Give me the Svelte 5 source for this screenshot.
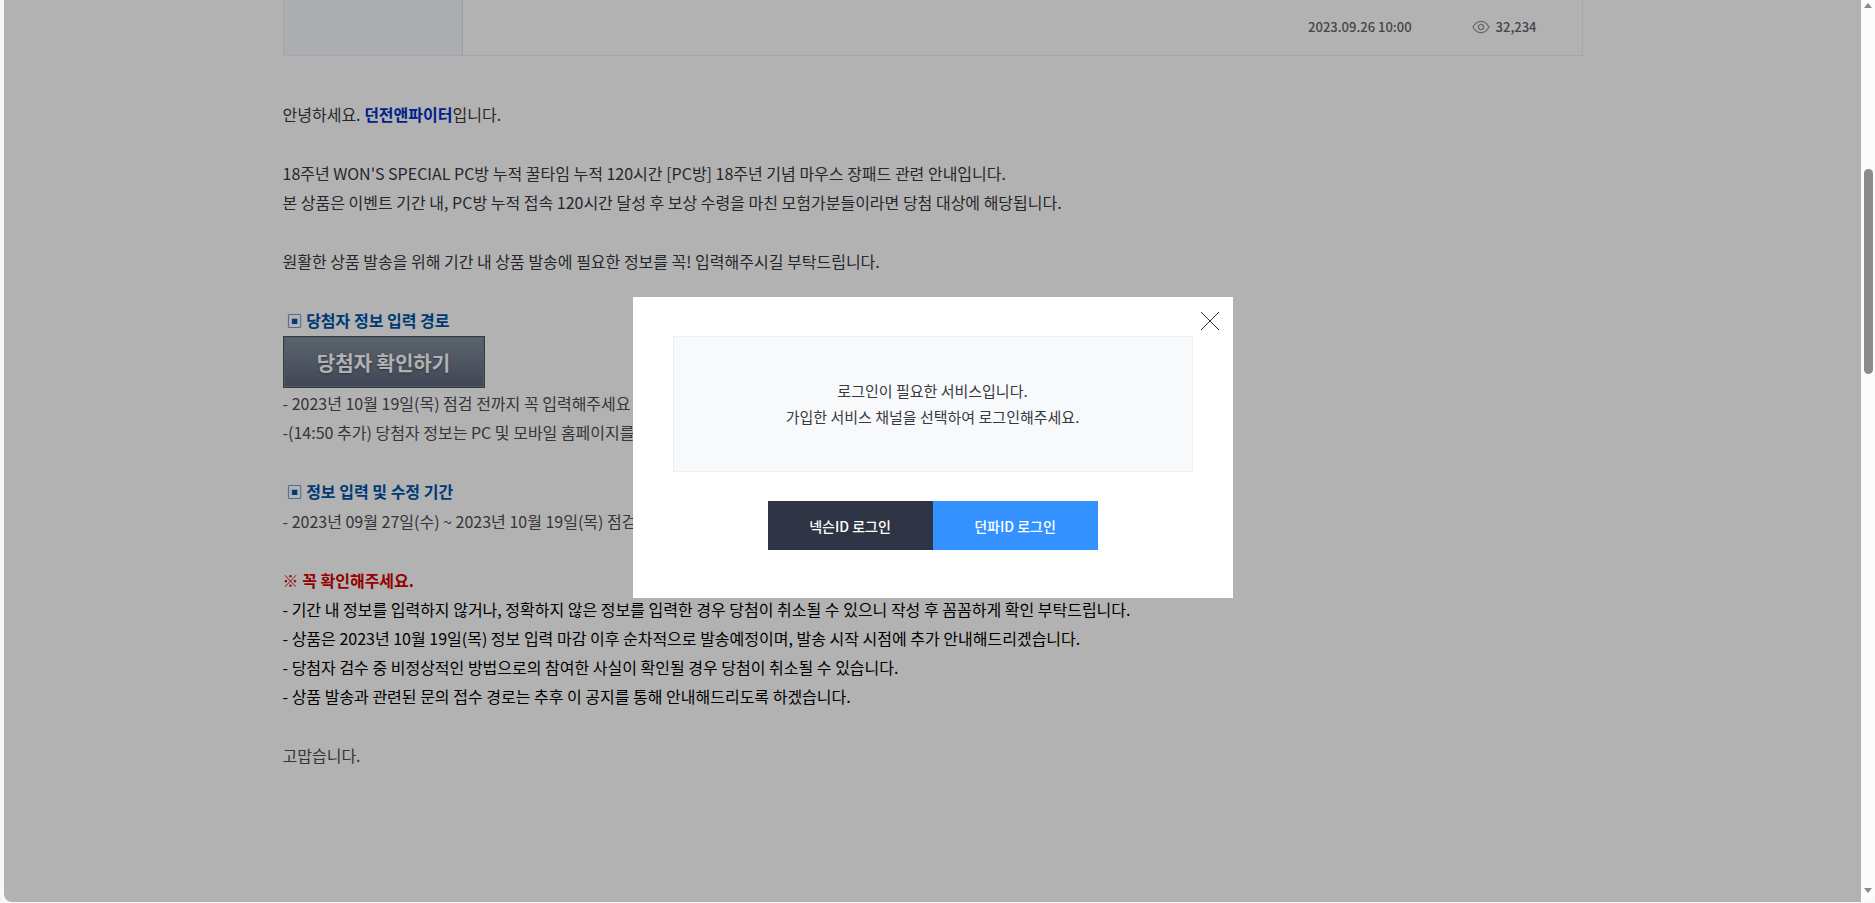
<script>
	const intro = [
		"18주년 WON'S SPECIAL PC방 누적 꿀타임 누적 120시간 [PC방] 18주년 기념 마우스 장패드 관련 안내입니다.",
		"본 상품은 이벤트 기간 내, PC방 누적 접속 120시간 달성 후 보상 수령을 마친 모험가분들이라면 당첨 대상에 해당됩니다."
	];

	const notices = [
		"- 기간 내 정보를 입력하지 않거나, 정확하지 않은 정보를 입력한 경우 당첨이 취소될 수 있으니 작성 후 꼼꼼하게 확인 부탁드립니다.",
		"- 상품은 2023년 10월 19일(목) 정보 입력 마감 이후 순차적으로 발송예정이며, 발송 시작 시점에 추가 안내해드리겠습니다.",
		"- 당첨자 검수 중 비정상적인 방법으로의 참여한 사실이 확인될 경우 당첨이 취소될 수 있습니다.",
		"- 상품 발송과 관련된 문의 접수 경로는 추후 이 공지를 통해 안내해드리도록 하겠습니다."
	];

	let showLogin = $state(true);
	const close = () => (showLogin = false);
</script>

<div class="window">
	<div class="page">
		<main class="content">
			<header class="post-header">
				<div class="thumb"></div>
				<div class="meta">
					<span>2023.09.26 10:00</span>
					<span class="views">
						<svg width="18" height="14" viewBox="0 0 18 14" aria-hidden="true">
							<path
								d="M1 7C3 3.2 5.7 1.3 9 1.3S15 3.2 17 7c-2 3.8-4.7 5.7-8 5.7S3 10.8 1 7Z"
							/>
							<circle cx="9" cy="7" r="2.6" />
						</svg>
						32,234
					</span>
				</div>
			</header>

			<article class="post">
				<p>안녕하세요. <strong class="game">던전앤파이터</strong>입니다.</p>

				<div class="group">
					{#each intro as line}
						<p>{line}</p>
					{/each}
				</div>

				<p>원활한 상품 발송을 위해 기간 내 상품 발송에 필요한 정보를 꼭! 입력해주시길 부탁드립니다.</p>

				<section class="soft">
					<h2><span class="mark">▣</span> 당첨자 정보 입력 경로</h2>
					<button class="winner" type="button">당첨자 확인하기</button>
					<p>- 2023년 10월 19일(목) 점검 전까지 꼭 입력해주세요</p>
					<p>-(14:50 추가) 당첨자 정보는 PC 및 모바일 홈페이지를</p>
				</section>

				<section class="soft">
					<h2><span class="mark">▣</span> 정보 입력 및 수정 기간</h2>
					<p>- 2023년 09월 27일(수) ~ 2023년 10월 19일(목) 점검</p>
				</section>

				<section class="notice">
					<h3>※ 꼭 확인해주세요.</h3>
					{#each notices as line}
						<p>{line}</p>
					{/each}
				</section>

				<p class="soft">고맙습니다.</p>
			</article>
		</main>

		{#if showLogin}
			<div class="dim">
				<div class="modal" role="dialog" aria-modal="true" aria-labelledby="login-message">
					<button class="close" type="button" aria-label="닫기" onclick={close}>
						<svg width="20" height="20" viewBox="0 0 20 20" aria-hidden="true">
							<path d="M1 1l18 18M19 1L1 19" />
						</svg>
					</button>
					<p class="message" id="login-message">
						로그인이 필요한 서비스입니다.<br />
						가입한 서비스 채널을 선택하여 로그인해주세요.
					</p>
					<div class="actions">
						<button class="nexon" type="button">넥슨ID 로그인</button>
						<button class="dnf" type="button">던파ID 로그인</button>
					</div>
				</div>
			</div>
		{/if}
	</div>

	<div class="scrollbar" aria-hidden="true">
		<svg width="8" height="5" viewBox="0 0 8 5"><path d="M4 0l4 5H0z" /></svg>
		<div class="track">
			<div class="thumb-bar"></div>
		</div>
		<svg width="8" height="5" viewBox="0 0 8 5"><path d="M0 0h8L4 5z" /></svg>
	</div>
</div>

<style>
	:global(body) {
		background: #f8f8f8;
	}

	.window {
		display: flex;
		box-sizing: border-box;
		height: 100vh;
		padding: 0 0 1px 4px;
		overflow: hidden;
		font-family: "Noto Sans CJK KR", "Noto Sans", sans-serif;
		font-size: 16px;
		line-height: 29px;
		color: #36393f;
	}

	p,
	h2,
	h3 {
		margin: 0;
		font-size: 16px;
	}

	button {
		padding: 0;
		border: 0;
		font-family: inherit;
		cursor: pointer;
	}

	.page {
		position: relative;
		flex: 1;
		min-width: 0;
		overflow: hidden;
		border-bottom-left-radius: 8px;
		background: #fff;
	}

	.content {
		max-width: 1300px;
		margin: 0 auto;
	}

	.post-header {
		display: flex;
		height: 55px;
		border: 1px solid #eceef2;
		border-top: 0;
	}

	.thumb {
		width: 178px;
		border-right: 1px solid #e0e4ec;
		background: #f6f8fc;
	}

	.meta {
		display: flex;
		flex: 1;
		justify-content: flex-end;
		gap: 60px;
		padding: 12px 45px 0 0;
		font-size: 13px;
		font-weight: 500;
		color: #62656c;
	}

	.views {
		display: flex;
		align-items: center;
		gap: 6px;
		height: 29px;
	}

	.views svg {
		fill: none;
		stroke: #9799a0;
		stroke-width: 1.3;
	}

	.post {
		display: flex;
		flex-direction: column;
		gap: 30px;
		padding-top: 44px;
	}

	.soft {
		color: #4b4e54;
	}

	.game {
		color: #0030c8;
	}

	h2 {
		margin: 0 0 1px 4px;
		color: #0054a6;
	}

	.mark {
		font-weight: 400;
	}

	.winner {
		display: block;
		width: 202px;
		height: 52px;
		margin-bottom: 1px;
		border: 1px solid #4e5665;
		background: linear-gradient(#84929f, #5d647b);
		box-shadow: inset 0 0 0 1px #747f90;
		font-size: 20px;
		font-weight: 700;
		color: #fff;
		text-shadow: 0 1px 2px #3f4656;
	}

	.notice {
		color: #000;
	}

	h3 {
		color: #d60000;
	}

	.dim {
		position: absolute;
		inset: 0;
		display: flex;
		align-items: center;
		justify-content: center;
		padding-bottom: 7px;
		background: rgba(0, 0, 0, 0.3);
	}

	.modal {
		position: relative;
		box-sizing: border-box;
		width: 600px;
		padding: 39px 40px 48px;
		background: #fff;
	}

	.close {
		position: absolute;
		top: 14px;
		right: 13px;
		width: 20px;
		height: 20px;
		background: none;
	}

	.close svg {
		display: block;
		fill: none;
		stroke: #333;
		stroke-width: 1;
	}

	.message {
		padding: 41px 0;
		border: 1px solid #eceef3;
		background: #f8f9fb;
		font-size: 15px;
		line-height: 26px;
		text-align: center;
	}

	.actions {
		display: flex;
		justify-content: center;
		margin-top: 29px;
	}

	.actions button {
		width: 165px;
		height: 49px;
		font-size: 14px;
		font-weight: 500;
		color: #fff;
	}

	.actions .nexon {
		background: #2f3544;
	}

	.actions .dnf {
		background: #3392ff;
	}

	.scrollbar {
		display: flex;
		flex-direction: column;
		align-items: center;
		box-sizing: border-box;
		width: 14px;
		padding: 3px 0 9px;
		border-bottom-right-radius: 8px;
		background: #fcfcfc;
	}

	.scrollbar svg {
		fill: #8b8b8b;
	}

	.track {
		flex: 1;
		width: 9px;
		padding-top: 161px;
	}

	.thumb-bar {
		height: 205px;
		border-radius: 5px;
		background: #8b8b8b;
	}
</style>
